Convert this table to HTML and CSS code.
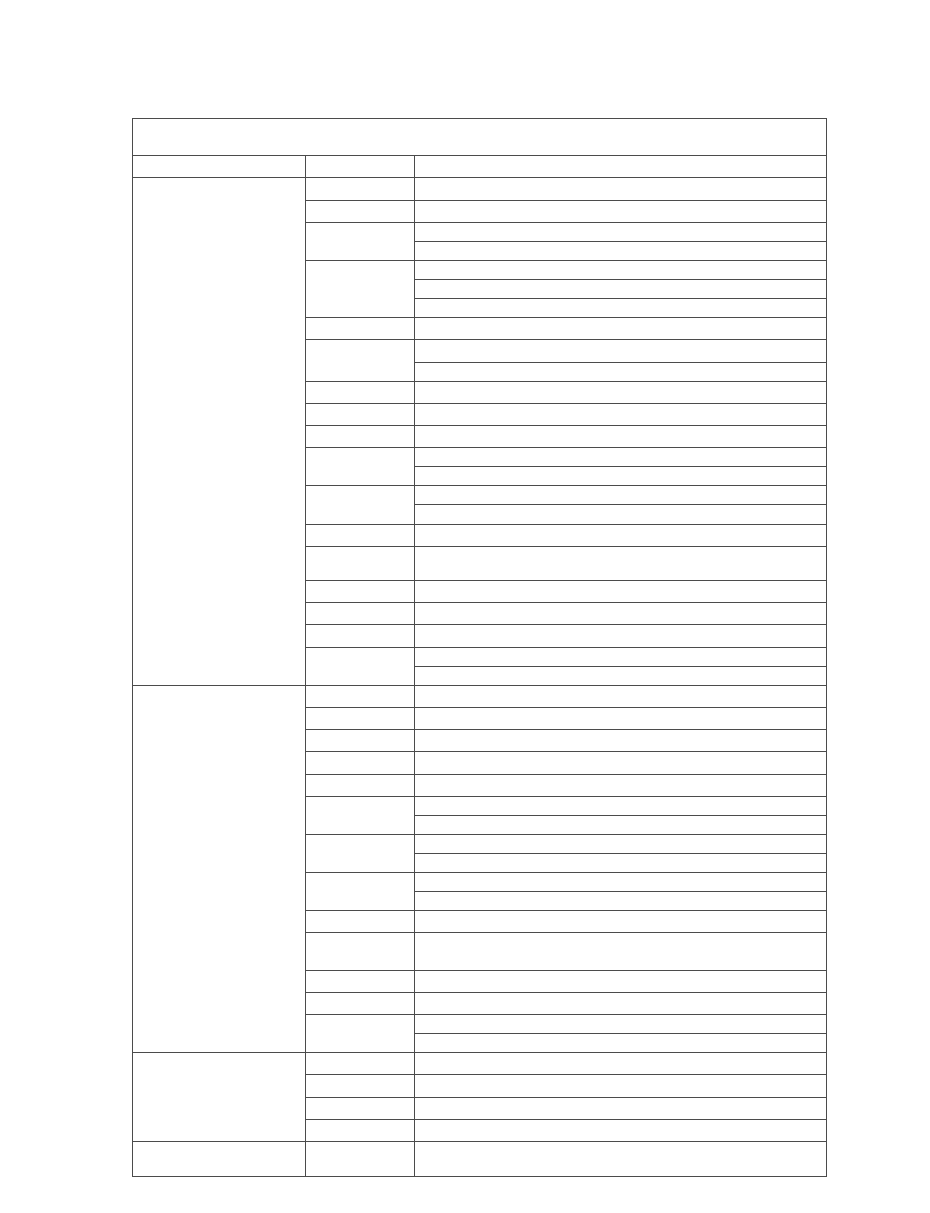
FILE: index.html
```html
<!DOCTYPE html>
<html lang="en">
<head>
<meta charset="utf-8">
<title>Table</title>
<link rel="stylesheet" href="styles.css">
</head>
<body>
<div class="sheet">
  <div class="c title"></div>
  <div class="c"></div><div class="c"></div><div class="c"></div>

  <div class="c s24"></div><div class="c"></div><div class="c"></div>
  <div class="c"></div><div class="c"></div>
  <div class="c s2"></div><div class="c"></div>
  <div class="c"></div>
  <div class="c s3"></div><div class="c"></div>
  <div class="c"></div>
  <div class="c"></div>
  <div class="c"></div><div class="c"></div>
  <div class="c s2"></div><div class="c"></div>
  <div class="c"></div>
  <div class="c"></div><div class="c"></div>
  <div class="c"></div><div class="c"></div>
  <div class="c"></div><div class="c"></div>
  <div class="c s2"></div><div class="c"></div>
  <div class="c"></div>
  <div class="c s2"></div><div class="c"></div>
  <div class="c"></div>
  <div class="c"></div><div class="c"></div>
  <div class="c"></div><div class="c"></div>
  <div class="c"></div><div class="c"></div>
  <div class="c"></div><div class="c"></div>
  <div class="c"></div><div class="c"></div>
  <div class="c s2"></div><div class="c"></div>
  <div class="c"></div>

  <div class="c s17"></div><div class="c"></div><div class="c"></div>
  <div class="c"></div><div class="c"></div>
  <div class="c"></div><div class="c"></div>
  <div class="c"></div><div class="c"></div>
  <div class="c"></div><div class="c"></div>
  <div class="c s2"></div><div class="c"></div>
  <div class="c"></div>
  <div class="c s2"></div><div class="c"></div>
  <div class="c"></div>
  <div class="c s2"></div><div class="c"></div>
  <div class="c"></div>
  <div class="c"></div><div class="c"></div>
  <div class="c"></div><div class="c"></div>
  <div class="c"></div><div class="c"></div>
  <div class="c"></div><div class="c"></div>
  <div class="c s2"></div><div class="c"></div>
  <div class="c"></div>

  <div class="c s4"></div><div class="c"></div><div class="c"></div>
  <div class="c"></div><div class="c"></div>
  <div class="c"></div><div class="c"></div>
  <div class="c"></div><div class="c"></div>

  <div class="c"></div><div class="c"></div><div class="c"></div>
</div>
</body>
</html>
```

FILE: styles.css
```css
html, body {
  margin: 0;
  padding: 0;
  background: #ffffff;
  font-family: "Liberation Sans", Arial, sans-serif;
}

.sheet {
  margin: 118px 0 0 132px;
  width: 695px;
  box-sizing: border-box;
  padding: 1px;
  background: #4b4b4b;
  display: grid;
  grid-template-columns: 172px 108px 411px;
  grid-template-rows:
    36px 21px 22px 21px 18px 18px 18px 18px 18px 21px
    22px 18px 21px 21px 21px 18px 18px 18px 19px 21px
    33px 21px 21px 22px 18px 18px 21px 21px 21px 22px
    21px 18px 18px 18px 18px 18px 18px 21px 37px 21px
    21px 18px 18px 21px 22px 21px 21px 34px;
  gap: 1px;
}

.c {
  background: #ffffff;
}

.title { grid-column: 1 / -1; }
.s2 { grid-row: span 2; }
.s3 { grid-row: span 3; }
.s4 { grid-row: span 4; }
.s17 { grid-row: span 17; }
.s24 { grid-row: span 24; }
```
